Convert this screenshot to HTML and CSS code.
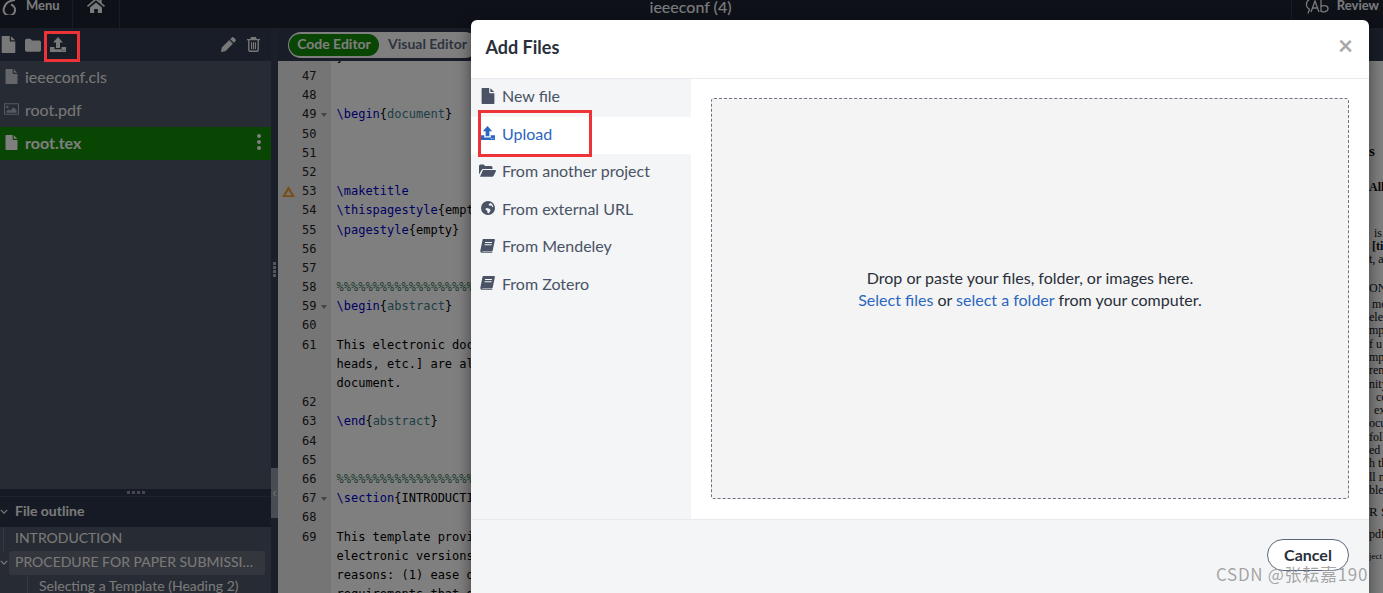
FILE: index.html
```html
<!DOCTYPE html>
<html lang="en">
<head>
<meta charset="utf-8">
<title>ieeeconf (4)</title>
<link rel="stylesheet" href="styles.css">
</head>
<body>
<svg class="defs" width="0" height="0" aria-hidden="true">
  <symbol id="i-file" viewBox="0 0 16 20"><path d="M0 1a1 1 0 0 1 1-1h8.500v5.500a1 1 0 0 0 1 1H16V19a1 1 0 0 1-1 1H1a1 1 0 0 1-1-1zM11 .2 15.800 5H11z"/></symbol>
  <symbol id="i-folder" viewBox="0 0 18 15"><path d="M0 2.500A2 2 0 0 1 2 .5h3.500a2 2 0 0 1 1.600 1l.6 1h8.300a2 2 0 0 1 2 2v8.500a2 2 0 0 1-2 2H2a2 2 0 0 1-2-2z"/></symbol>
  <symbol id="i-upload" viewBox="0 0 16 15"><path d="M8 0l5 5.500h-3V11H6V5.500H3zM0 10h4.500v2.200h7V10H16v5H0zM11.500 13v.8h1V13zm2 0v.8h1V13z" fill-rule="evenodd"/></symbol>
  <symbol id="i-pencil" viewBox="0 0 16 16"><path d="M11.500.6a1.500 1.500 0 0 1 2.100 0l1.800 1.800a1.500 1.500 0 0 1 0 2.100l-1.700 1.700-3.900-3.900zM8.800 3.300l3.900 3.900-8 8L0 16l.8-4.700z"/></symbol>
  <symbol id="i-trash" viewBox="0 0 14 16"><path d="M4.500 0h5l1 2H14v1.500h-1.200V14a2 2 0 0 1-2 2H3.200a2 2 0 0 1-2-2V3.500H0V2h3.500zM2.700 3.500V14c0 .3.200.5.500.5h7.600c.3 0 .5-.2.500-.5V3.500zM4.300 5.500h1.200v7.500H4.300zm2.100 0h1.200v7.500H6.400zm2.100 0h1.200v7.500H8.500z" fill-rule="evenodd"/></symbol>
  <symbol id="i-image" viewBox="0 0 18 14"><path d="M1 0h16a1 1 0 0 1 1 1v12a1 1 0 0 1-1 1H1a1 1 0 0 1-1-1V1a1 1 0 0 1 1-1zm.3 1.300v11.400h15.400V1.300zM4 3a1.500 1.500 0 1 1 0 3 1.500 1.500 0 0 1 0-3zM3 11.500V9.500l2.500-2 2 1.500 4-4 3.500 3.500v3z" fill-rule="evenodd"/></symbol>
  <symbol id="i-open" viewBox="0 0 17 13"><path d="M0 2a1.500 1.500 0 0 1 1.500-1.500h3.200L6 2h6a1.500 1.500 0 0 1 1.500 1.500V5H4.300a2 2 0 0 0-1.700 1L0 10.500zM4 6h12.200c.6 0 1 .6.700 1.200l-2.400 4.800a1.500 1.500 0 0 1-1.300.8H1z"/></symbol>
  <symbol id="i-globe" viewBox="0 0 14 14"><path d="M7 0a7 7 0 1 1 0 14A7 7 0 0 1 7 0zm2 2.300L7.500 3.500l1 1.300 2-.3.800 1.500 1 .2c-.2-2-1.200-3.200-2.300-3.900zM5.500 7 4.200 8.300l2 1.500.4 2.200 1.200.3 1.800-2.800-1-1.800z" fill-rule="evenodd"/></symbol>
  <symbol id="i-book" viewBox="0 0 15 14"><path d="M3.800 0H14c.6 0 1 .4.900 1l-2.200 10.500c-.1.600-.5 1-1.100 1H2.800c-.5 0-.8.300-.8.500s.3.300.8.300h9.600l-.2.700H2.500C1 14 .2 13 .3 11.800L2.500 1C2.600.4 3.200 0 3.800 0zM5 3v1h7V3zm-.4 2.200v1h7v-1z" fill-rule="evenodd"/></symbol>
  <symbol id="i-home" viewBox="0 0 18 15"><path d="M9 0l3.500 3V1.200h2.200v3.700L18 7.800l-1 1.100L9 2.300 1 8.900 0 7.800zM3 9.500 9 4.500l6 5V15h-4.200v-4H7.200v4H3z"/></symbol>
  <symbol id="i-warn" viewBox="0 0 14 12"><path d="M7 0l7 12H0zM7 4.600 3.800 10h6.400z" fill-rule="evenodd"/></symbol>
</svg>

<div class="app">
  <header class="topbar">
    <div class="top-left">
      <svg class="logo" viewBox="0 0 16 16"><path d="M13 1C8 1.500 3.500 4 2.200 8.500A5.700 5.700 0 1 0 9 5.500"/></svg>
      <span class="menu-label">Menu</span>
    </div>
    <div class="top-home"><svg class="ic-home"><use href="#i-home"/></svg></div>
    <div class="top-title">ieeeconf (4)</div>
    <div class="top-review">
      <svg class="ic-review" viewBox="0 0 26 17"><path d="M7 0.500C3 1.500 1 4 1.500 7.500c.2 1.800 1.500 3 3 3.800L3 15.500"/><path d="M6 14 10 3l4 11M7.500 10h5M16 1v13M16 9c1-2 7-2 7 1.500S17 15 16 12.500"/></svg>
      <span class="review-label">Review</span>
    </div>
  </header>

  <main class="main">
    <aside class="sidebar">
      <div class="side-tools">
        <svg class="tool tool-file"><use href="#i-file"/></svg>
        <svg class="tool tool-folder"><use href="#i-folder"/></svg>
        <svg class="tool tool-upload"><use href="#i-upload"/></svg>
        <span class="spacer"></span>
        <svg class="tool tool-pencil"><use href="#i-pencil"/></svg>
        <svg class="tool tool-trash"><use href="#i-trash"/></svg>
      </div>
      <ul class="files">
        <li class="file"><svg class="file-ic"><use href="#i-file"/></svg>ieeeconf.cls</li>
        <li class="file"><svg class="file-ic file-ic-img"><use href="#i-image"/></svg>root.pdf</li>
        <li class="file file-on"><svg class="file-ic"><use href="#i-file"/></svg>root.tex<span class="kebab"><i></i><i></i><i></i></span></li>
      </ul>
      <section class="outline">
        <div class="out-grip"><i></i><i></i><i></i><i></i></div>
        <div class="out-head"><svg class="chev" viewBox="0 0 10 6"><path d="M1 1l4 4 4-4"/></svg>File outline</div>
        <div class="out-row"><span class="guide"></span><span class="out-text">INTRODUCTION</span></div>
        <div class="out-row"><svg class="chev chev-row" viewBox="0 0 10 6"><path d="M1 1l4 4 4-4"/></svg><span class="out-text out-on">PROCEDURE FOR PAPER SUBMISSION</span></div>
        <div class="out-row out-sub"><span class="guide"></span><span class="out-text">Selecting a Template (Heading 2)</span></div>
      </section>
    </aside>

    <div class="resizer">
      <span class="res-dots"><i></i><i></i><i></i><i></i></span>
      <span class="res-toggle">‹</span>
    </div>

    <section class="editor">
      <div class="ed-tools">
        <div class="switch"><span class="sw-on">Code Editor</span><span class="sw-off">Visual Editor</span></div>
      </div>
      <div class="code">
        <div class="code-scroll">
          <div class="ln"><span class="gut"><b class="no"></b></span><span class="tx">}</span></div>
          <div class="ln"><span class="gut"><b class="no">47</b></span><span class="tx"></span></div>
          <div class="ln"><span class="gut"><b class="no">48</b></span><span class="tx"></span></div>
          <div class="ln"><span class="gut"><b class="no fold">49</b></span><span class="tx"><u>\begin</u>{<em>document</em>}</span></div>
          <div class="ln"><span class="gut"><b class="no">50</b></span><span class="tx"></span></div>
          <div class="ln"><span class="gut"><b class="no">51</b></span><span class="tx"></span></div>
          <div class="ln"><span class="gut"><b class="no">52</b></span><span class="tx"></span></div>
          <div class="ln"><span class="gut"><svg class="warn"><use href="#i-warn"/></svg><b class="no">53</b></span><span class="tx"><u>\maketitle</u></span></div>
          <div class="ln"><span class="gut"><b class="no">54</b></span><span class="tx"><u>\thispagestyle</u>{empty}</span></div>
          <div class="ln"><span class="gut"><b class="no">55</b></span><span class="tx"><u>\pagestyle</u>{empty}</span></div>
          <div class="ln"><span class="gut"><b class="no">56</b></span><span class="tx"></span></div>
          <div class="ln"><span class="gut"><b class="no">57</b></span><span class="tx"></span></div>
          <div class="ln"><span class="gut"><b class="no">58</b></span><span class="tx"><s>%%%%%%%%%%%%%%%%%%%%%%%%%%%%%%%%%%%%%%%%%</s></span></div>
          <div class="ln"><span class="gut"><b class="no fold">59</b></span><span class="tx"><u>\begin</u>{<em>abstract</em>}</span></div>
          <div class="ln"><span class="gut"><b class="no">60</b></span><span class="tx"></span></div>
          <div class="ln"><span class="gut"><b class="no">61</b></span><span class="tx">This electronic document is a live template.</span></div>
          <div class="ln"><span class="gut"></span><span class="tx">heads, etc.] are already defined on the style sheet.</span></div>
          <div class="ln"><span class="gut"></span><span class="tx">document.</span></div>
          <div class="ln"><span class="gut"><b class="no">62</b></span><span class="tx"></span></div>
          <div class="ln"><span class="gut"><b class="no">63</b></span><span class="tx"><u>\end</u>{<em>abstract</em>}</span></div>
          <div class="ln"><span class="gut"><b class="no">64</b></span><span class="tx"></span></div>
          <div class="ln"><span class="gut"><b class="no">65</b></span><span class="tx"></span></div>
          <div class="ln"><span class="gut"><b class="no">66</b></span><span class="tx"><s>%%%%%%%%%%%%%%%%%%%%%%%%%%%%%%%%%%%%%%%%%</s></span></div>
          <div class="ln"><span class="gut"><b class="no fold">67</b></span><span class="tx"><u>\section</u>{INTRODUCTION}</span></div>
          <div class="ln"><span class="gut"><b class="no">68</b></span><span class="tx"></span></div>
          <div class="ln"><span class="gut"><b class="no">69</b></span><span class="tx">This template provides authors with most of the specifications.</span></div>
          <div class="ln"><span class="gut"></span><span class="tx">electronic versions of their papers.</span></div>
          <div class="ln"><span class="gut"></span><span class="tx">reasons: (1) ease of use when formatting.</span></div>
          <div class="ln"><span class="gut"></span><span class="tx">requirements that govern the electronic.</span></div>
        </div>
      </div>
    </section>

    <section class="pdf">
      <div class="pdf-tools"></div>
      <div class="pdf-page">
        <p class="pl g1 bd">s</p>
        <p class="pl g2 bd">All</p>
        <p class="pl g3 i2">is</p>
        <p class="pl bd i1">[ti</p>
        <p class="pl">t, a</p>
        <p class="pl g4">ON</p>
        <p class="pl g7 i1">mo</p>
        <p class="pl">ele</p>
        <p class="pl">mp</p>
        <p class="pl">f u</p>
        <p class="pl">mpl</p>
        <p class="pl">ren</p>
        <p class="pl">nity</p>
        <p class="pl i3">co</p>
        <p class="pl i2">ex</p>
        <p class="pl">ocu</p>
        <p class="pl">foll</p>
        <p class="pl">ed</p>
        <p class="pl">h th</p>
        <p class="pl">ll n</p>
        <p class="pl">ble</p>
        <p class="pl g5">R S</p>
        <p class="pl g6">pdf</p>
        <p class="pl g6 tiny">ject</p>
      </div>
    </section>
  </main>

  <div class="backdrop"></div>

  <div class="modal">
    <div class="m-head">
      <h2 class="m-title">Add Files</h2>
      <span class="m-close">×</span>
    </div>
    <div class="m-body">
      <nav class="m-nav">
        <a class="m-item"><span class="m-ic"><svg class="mi mi-file"><use href="#i-file"/></svg></span>New file</a>
        <a class="m-item m-on"><span class="m-ic"><svg class="mi mi-upload"><use href="#i-upload"/></svg></span>Upload</a>
        <a class="m-item"><span class="m-ic"><svg class="mi mi-open"><use href="#i-open"/></svg></span>From another project</a>
        <a class="m-item"><span class="m-ic"><svg class="mi mi-globe"><use href="#i-globe"/></svg></span>From external URL</a>
        <a class="m-item"><span class="m-ic"><svg class="mi mi-book"><use href="#i-book"/></svg></span>From Mendeley</a>
        <a class="m-item"><span class="m-ic"><svg class="mi mi-book"><use href="#i-book"/></svg></span>From Zotero</a>
      </nav>
      <div class="m-pane">
        <div class="drop">
          <p class="drop-text">Drop or paste your files, folder, or images here.<br><a>Select files</a> or <a>select a folder</a> from your computer.</p>
        </div>
      </div>
    </div>
    <div class="m-foot"><button class="cancel">Cancel</button></div>
  </div>

  <div class="mark mark-tool"></div>
  <div class="mark mark-nav"></div>
  <div class="watermark">CSDN @张耘嘉190</div>
</div>
</body>
</html>
```
FILE: styles.css
```css
* { box-sizing: border-box; }
html, body { margin: 0; padding: 0; height: 100%; overflow: hidden; }
body { font-family: Lato, "Open Sans", sans-serif; background: #fff; }
.defs { position: absolute; }
svg { fill: currentColor; display: block; }
ul, p, h2 { margin: 0; padding: 0; list-style: none; }

.app { position: relative; width: 1383px; height: 593px; overflow: hidden; display: flex; flex-direction: column; }

/* top bar */
.topbar { flex: 0 0 28px; min-height: 0; height: 28px; display: flex; align-items: flex-end; background: #1c2230; color: #f2f4f7; padding-bottom: 13px; position: relative; }
.top-left { width: 73px; display: flex; align-items: center; padding-left: 2px; gap: 8px; border-right: 1px solid #343a48; margin-bottom: -13px; padding-bottom: 13px; }
.logo { width: 16px; height: 16px; fill: none; stroke: currentColor; stroke-width: 2; margin-bottom: -3px; flex: none; }
.menu-label { font-weight: 700; font-size: 13px; line-height: 20px; }
.top-home { width: 47px; display: flex; justify-content: center; border-right: 1px solid #343a48; margin-bottom: -13px; padding-bottom: 15px; }
.ic-home { width: 18px; height: 15px; }
.top-title { position: absolute; left: -2px; right: 0; top: -3px; text-align: center; font-size: 16px; font-weight: 500; line-height: 20px; }
.top-review { margin-left: auto; display: flex; align-items: center; gap: 6px; padding: 0 4px 13px 13px; margin-bottom: -13px; border-left: 1px solid #343a48; }
.ic-review { width: 26px; height: 17px; fill: none; stroke: currentColor; stroke-width: 1.300; margin-bottom: -3px; }
.review-label { font-weight: 700; font-size: 13px; line-height: 20px; }

.main { flex: 1; min-height: 0; display: flex; }

/* sidebar */
.sidebar { width: 271px; flex: none; display: flex; flex-direction: column; background: #4f5767; }
.side-tools { flex: 0 0 33px; display: flex; align-items: center; background: #303a50; color: #f0f0f0; padding: 0 11px 0 1px; }
.tool { flex: none; }
.tool-file { width: 15px; height: 17px; }
.tool-folder { width: 16px; height: 14px; margin-left: 9px; }
.tool-upload { width: 16px; height: 15px; margin-left: 9px; }
.spacer { flex: 1; }
.tool-pencil { width: 15px; height: 15px; }
.tool-trash { width: 13px; height: 15px; margin-left: 11px; }
.files { flex: 1; min-height: 0; }
.file { height: 33px; display: flex; align-items: center; font-size: 16px; color: #f0f0f0; padding: 0 0 3px 5px; position: relative; }
.file-ic { width: 13px; height: 15px; margin-right: 7px; color: #c8ccd4; }
.file-ic-img { width: 15px; height: 12px; margin-left: -1px; margin-right: 6px; color: #aab2c0; }
.file-on { background: #138a07; font-weight: 700; color: #fff; }
.file-on .file-ic { color: #fff; }
.kebab { position: absolute; right: 10px; top: 7px; display: flex; flex-direction: column; gap: 2px; }
.kebab i { width: 4px; height: 4px; background: #fff; border-radius: 50%; }

.outline { flex: 0 0 104px; overflow: hidden; font-size: 14px; color: #f4f4f4; }
.out-grip { height: 8px; background: #2c3448; border-bottom: 1px solid #3c4559; display: flex; justify-content: center; align-items: center; gap: 2px; padding-bottom: 1px; }
.out-grip i { width: 3px; height: 3px; background: #8a8f98; }
.out-head { height: 30px; background: #2c3448; display: flex; align-items: center; font-weight: 700; font-size: 14px; padding: 0 0 4px 15px; position: relative; }
.chev { position: absolute; left: 0; width: 8px; height: 5px; fill: none; stroke: currentColor; stroke-width: 1.500; top: 12px; }
.out-row { height: 24px; display: flex; align-items: center; position: relative; padding: 0 6px 0 9px; }
.chev-row { top: 9px; }
.out-text { flex: 1; min-width: 0; height: 24px; line-height: 22px; padding: 0 11px 0 6px; white-space: nowrap; overflow: hidden; text-overflow: ellipsis; }
.out-on { background: #666d7a; border-radius: 3px; }
.guide { position: absolute; left: 3px; top: 0; bottom: 0; width: 1px; background: #6a7282; }
.out-sub { padding-left: 33px; }
.out-sub .guide { left: 27px; }

/* resizer */
.resizer { width: 7px; flex: none; background: #363e52; position: relative; }
.res-dots { position: absolute; left: 2px; top: 234px; display: flex; flex-direction: column; gap: 1px; }
.res-dots i { width: 3px; height: 3px; background: #a8acb2; }
.res-toggle { position: absolute; left: 0; top: 440px; width: 7px; height: 50px; background: #9098a6; color: #e8e8e8; font-size: 14px; line-height: 48px; text-align: center; }

/* editor */
.editor { flex: 1; min-width: 0; display: flex; flex-direction: column; }
.ed-tools { flex: 0 0 33px; background: #303a50; display: flex; align-items: center; padding-left: 10px; overflow: hidden; }
.switch { display: flex; align-items: center; height: 26px; background: #fff; border-radius: 13px; padding: 0 2px 0 1px; }
.sw-on { height: 22px; line-height: 19px; width: 90px; text-align: center; background: #138a07; color: #fff; border-radius: 11px; font-weight: 700; font-size: 14px; }
.sw-off { padding: 0 9px 3px; font-weight: 700; font-size: 14px; color: #5d6a7e; white-space: nowrap; }
.code { flex: 1; min-height: 0; overflow: hidden; background: #fff; font-family: "DejaVu Sans Mono", monospace; font-size: 12px; color: #000; }
.code-scroll { margin-top: -13.200px; }
.ln { height: 19.200px; display: flex; line-height: 19.200px; }
.gut { width: 53px; flex: none; background: #ebebeb; position: relative; padding-left: 24px; }
.no { font-weight: 400; color: #222; display: block; height: 100%; }
.fold::after { content: ""; position: absolute; left: 43px; top: 8px; border: 3px solid transparent; border-top: 4px solid #888; border-bottom: 0; }
.warn { position: absolute; left: 4px; top: 4px; width: 13px; height: 11px; color: #f09a2e; }
.tx { padding-left: 5.500px; white-space: nowrap; }
.tx u { text-decoration: none; color: #0000c8; }
.tx em { font-style: normal; color: #3c7c8c; }
.tx s { text-decoration: none; color: #3c8060; }

/* pdf */
.pdf { width: 14px; flex: none; display: flex; flex-direction: column; overflow: hidden; background: #fff; }
.pdf-tools { flex: 0 0 33px; background: #303a50; }
.pdf-page { flex: 1; font-family: "Liberation Serif", serif; font-size: 12px; color: #111; padding-top: 84px; }
.pl { height: 13.300px; line-height: 13.300px; white-space: nowrap; }
.bd { font-weight: 700; }
.g1 { font-size: 15px; }
.g2 { margin-top: 23px; font-size: 12px; }
.g3 { margin-top: 32px; }
.g4 { margin-top: 16px; }
.g5 { margin-top: 8px; font-size: 13px; }
.g6 { margin-top: 9px; }
.g7 { margin-top: 2px; }
.tiny { font-size: 9px; }
.i1 { text-indent: 3px; }
.i2 { text-indent: 5px; }
.i3 { text-indent: 7px; }

/* dialog */
.backdrop { position: absolute; inset: 0; background: rgba(0,0,0,.5); }
.modal { position: absolute; left: 471px; top: 20px; width: 898px; height: 600px; background: #fff; border-radius: 6px; box-shadow: 0 5px 15px rgba(0,0,0,.5); display: flex; flex-direction: column; overflow: hidden; color: #495365; }
.m-head { flex: 0 0 59px; border-bottom: 1px solid #e7e9ee; display: flex; align-items: center; padding: 0 16px 0 15px; justify-content: space-between; }
.m-title { font-size: 18px; font-weight: 700; color: #2a2f3a; margin-top: -4px; margin-left: -0.500px; }
.m-close { font-size: 26px; font-weight: 700; color: #a8a8a8; line-height: 26px; margin-top: -8px; }
.m-body { flex: 0 0 440px; display: flex; }
.m-nav { width: 220px; flex: none; background: #f4f5f6; }
.m-item { height: 37.500px; display: flex; align-items: center; font-size: 16px; padding-bottom: 4px; }
.m-ic { width: 31px; flex: none; display: flex; justify-content: flex-end; padding-right: 7.500px; }
.mi { color: #495365; }
.mi-file { width: 14px; height: 16px; }
.mi-upload { width: 15px; height: 14px; color: #2b66c0; }
.mi-open { width: 17px; height: 13px; margin-right: -1px; }
.mi-globe { width: 14px; height: 14px; }
.mi-book { width: 15px; height: 14px; }
.m-on { background: #fff; color: #2b66c0; }
.m-pane { flex: 1; padding: 19px 20px 20px; display: flex; }
.drop { flex: 1; border: 1px dashed #6b7486; border-radius: 3px; background: #f4f4f4; display: flex; align-items: center; justify-content: center; padding-bottom: 20px; }
.drop-text { font-size: 16px; line-height: 22px; color: #2a2f3a; text-align: center; }
.drop-text a { color: #2b66c0; }
.m-foot { flex: 1; background: #f4f5f6; border-top: 1px solid #e7e9ee; padding: 19px 20px 0 0; display: flex; justify-content: flex-end; align-items: flex-start; }
.cancel { width: 82px; height: 32px; border: 1px solid #5a6a7d; border-radius: 16px; background: #fff; color: #2a2f3a; font: 700 16px/1 Lato, sans-serif; padding: 0; }

/* annotations */
.mark { position: absolute; border: 3px solid #ee3338; }
.mark-tool { left: 44px; top: 31px; width: 36px; height: 31px; }
.mark-nav { left: 478px; top: 110px; width: 114px; height: 47px; }
.watermark { position: absolute; left: 1216px; top: 562px; font-family: "Noto Sans CJK SC", sans-serif; font-size: 17px; line-height: 24px; letter-spacing: .7px; color: rgba(150,150,150,.85); white-space: nowrap; }
```
